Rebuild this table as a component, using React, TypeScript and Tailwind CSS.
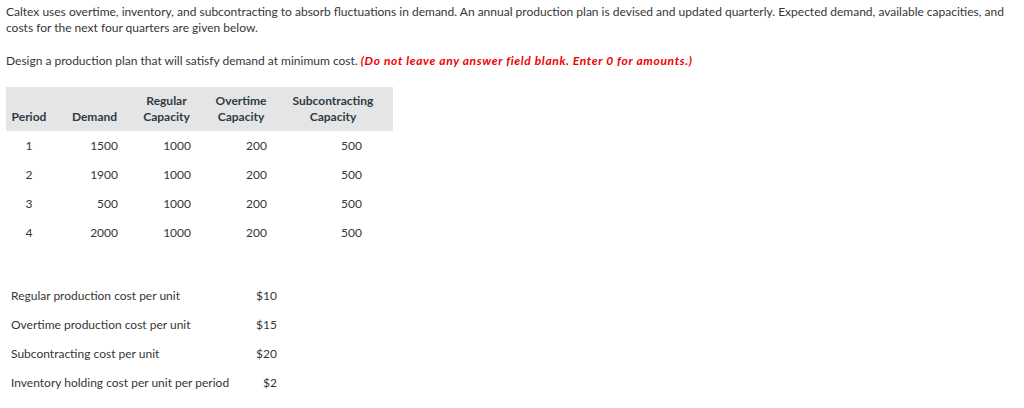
import React from 'react';

const rows = [
  { p: '1', d: '1500', r: '1000', o: '200', s: '500' },
  { p: '2', d: '1900', r: '1000', o: '200', s: '500' },
  { p: '3', d: '500', r: '1000', o: '200', s: '500' },
  { p: '4', d: '2000', r: '1000', o: '200', s: '500' },
];

const costs = [
  { label: 'Regular production cost per unit', value: '$10' },
  { label: 'Overtime production cost per unit', value: '$15' },
  { label: 'Subcontracting cost per unit', value: '$20' },
  { label: 'Inventory holding cost per unit per period', value: '$2' },
];

export default function App() {
  return (
    <div className="w-[1024px] h-[408px] bg-white text-[#363636] text-[12px] leading-[16px] font-['Lato','Liberation_Sans',sans-serif] px-[6px] pt-[4px] overflow-hidden">
      <p>
        Caltex uses overtime, inventory, and subcontracting to absorb fluctuations in demand. An annual production plan is devised and updated quarterly. Expected demand, available capacities, and costs for the next four quarters are given below.
      </p>
      <p className="mt-[17px]">
        Design a production plan that will satisfy demand at minimum cost.{' '}
        <span className="text-[#ee0000] font-bold italic tracking-[0.65px]">(Do not leave any answer field blank. Enter 0 for amounts.)</span>
      </p>

      <table className="mt-[18px] border-collapse">
        <thead>
          <tr className="bg-[#e5e5e5] h-[44px] text-[#2d3b45]">
            <th className="w-[46px] text-center align-bottom pb-[6px] font-bold">Period</th>
            <th className="w-[85px] text-center align-bottom pb-[6px] font-bold">Demand</th>
            <th className="w-[59px] text-center align-bottom pb-[6px] font-bold">Regular<br />Capacity</th>
            <th className="w-[90px] text-center align-bottom pb-[6px] font-bold">Overtime<br />Capacity</th>
            <th className="w-[107px] text-center align-bottom pb-[6px] pr-[13px] font-bold">Subcontracting<br />Capacity</th>
          </tr>
        </thead>
        <tbody>
          {rows.map((r) => (
            <tr key={r.p} className="h-[29px]">
              <td className="text-center">{r.p}</td>
              <td className="text-right pr-[19px]">{r.d}</td>
              <td className="text-right pr-[5px]">{r.r}</td>
              <td className="text-right pr-[19px]">{r.o}</td>
              <td className="text-right pr-[31px]">{r.s}</td>
            </tr>
          ))}
        </tbody>
      </table>

      <table className="mt-[34px] border-collapse">
        <tbody>
          {costs.map((c) => (
            <tr key={c.label} className="h-[29px]">
              <td className="w-[234px] pl-[5px] text-left">{c.label}</td>
              <td className="w-[42px] pr-[5px] text-right">{c.value}</td>
            </tr>
          ))}
        </tbody>
      </table>
    </div>
  );
}
